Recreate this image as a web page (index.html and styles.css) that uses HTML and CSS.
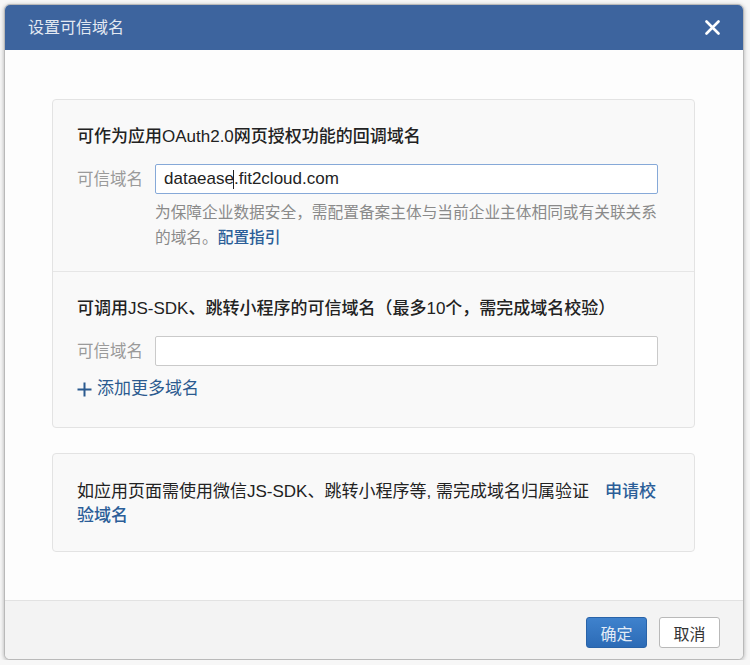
FILE: index.html
```html
<!DOCTYPE html>
<html lang="zh-CN">
<head>
<meta charset="utf-8">
<title>设置可信域名</title>
<link rel="stylesheet" href="styles.css">
</head>
<body>
<div class="dialog">
  <div class="dialog-header">
    <span class="dialog-title">设置可信域名</span>
    <span class="dialog-close" aria-label="关闭">
      <svg width="15" height="15" viewBox="0 0 15 15"><path d="M1.5 1.5 L13.5 13.5 M13.5 1.5 L1.5 13.5" stroke="#fff" stroke-width="2.6" stroke-linecap="round" fill="none"/></svg>
    </span>
  </div>
  <div class="dialog-body">
    <div class="card">
      <div class="section section-first">
        <div class="section-title">可作为应用OAuth2.0网页授权功能的回调域名</div>
        <div class="field-row">
          <span class="field-label">可信域名</span>
          <div class="field-input focused"><span>dataease</span><span class="caret"></span><span>.fit2cloud.com</span></div>
        </div>
        <div class="field-help"><span class="help-line">为保障企业数据安全，需配置备案主体与当前企业主体相同或有关联关系</span><span class="help-line">的域名。<a class="link">配置指引</a></span></div>
      </div>
      <div class="section section-second">
        <div class="section-title">可调用JS-SDK、跳转小程序的可信域名（最多10个，需完成域名校验）</div>
        <div class="field-row">
          <span class="field-label">可信域名</span>
          <div class="field-input"></div>
        </div>
        <a class="add-more">
          <svg width="15" height="15" viewBox="0 0 15 15"><path d="M7.5 0.5 V14.5 M0.5 7.5 H14.5" stroke="#2b5a8f" stroke-width="2" fill="none"/></svg>
          <span>添加更多域名</span>
        </a>
      </div>
    </div>
    <div class="card card-note">
      <p class="note"><span class="note-line">如应用页面需使用微信JS-SDK、跳转小程序等, 需完成域名归属验证<a class="link note-link">申请校</a></span><span class="note-line"><a class="link">验域名</a></span></p>
    </div>
  </div>
  <div class="dialog-footer">
    <button class="btn btn-primary">确定</button>
    <button class="btn btn-default">取消</button>
  </div>
</div>
</body>
</html>
```

FILE: styles.css
```css
* {
  box-sizing: border-box;
}

html, body {
  margin: 0;
  padding: 0;
  background: #f7f7f7;
}

body {
  font-family: "Liberation Sans", "Noto Sans CJK SC", sans-serif;
  color: #222;
  padding: 4px 0 0 4px;
}

.dialog {
  width: 740px;
  height: 656px;
  display: flex;
  flex-direction: column;
  border: 1px solid #b9b9b9;
  border-radius: 6px;
  overflow: hidden;
  background: #fdfdfd;
  box-shadow: 0 1px 4px rgba(0, 0, 0, 0.3);
}

.dialog-header {
  height: 45px;
  flex: none;
  background: #3d649e;
  display: flex;
  align-items: center;
  justify-content: space-between;
  padding: 0 23px 0 23px;
}

.dialog-title {
  color: #e3e9f2;
  font-size: 16px;
  line-height: 20px;
}

.dialog-close {
  display: flex;
  width: 15px;
  height: 15px;
}

.dialog-body {
  flex: 1;
  padding: 49px 48px 0 47px;
  display: flex;
  flex-direction: column;
  gap: 25px;
}

.card {
  background: #f9f9f9;
  border: 1px solid #e3e3e3;
  border-radius: 4px;
}

.section {
  padding: 0 24px;
}

.section-first {
  padding-top: 25px;
  padding-bottom: 21px;
  border-bottom: 1px solid #e6e6e6;
}

.section-second {
  padding-top: 25px;
  padding-bottom: 26px;
}

.section-title {
  font-size: 17px;
  line-height: 24px;
  font-weight: 500;
  color: #222;
}

.field-row {
  display: flex;
  align-items: center;
  gap: 10px;
  margin-top: 15px;
}

.field-label {
  width: 68px;
  flex: none;
  font-size: 16.5px;
  color: #9a9a9a;
  line-height: 24px;
}

.field-input {
  width: 503px;
  height: 30px;
  background: #fff;
  border: 1px solid #cacaca;
  border-radius: 2px;
  padding: 0 8px;
  display: flex;
  align-items: center;
  font-size: 17px;
  color: #222;
}

.field-input.focused {
  border-color: #86a9d8;
}

.caret {
  display: inline-block;
  width: 1px;
  height: 19px;
  background: #222;
  margin: 0 0 0 -1px;
}

.field-help {
  margin: 6px 0 0 78px;
  width: 515px;
  font-size: 15.7px;
  line-height: 25px;
  color: #8a8a8a;
  display: flex;
  flex-direction: column;
}

.help-line {
  display: block;
  white-space: nowrap;
}

.link {
  color: #2b5e98;
  font-weight: 500;
  cursor: pointer;
}

.add-more {
  display: flex;
  align-items: center;
  gap: 5px;
  margin-top: 11px;
  color: #2b5a8f;
  font-size: 17px;
  line-height: 24px;
}

.card-note {
  padding: 26px 24px 23px 24px;
}

.note {
  margin: 0;
  font-size: 17px;
  line-height: 24px;
  color: #222;
  display: flex;
  flex-direction: column;
}

.note-line {
  display: block;
  white-space: nowrap;
}

.note-link {
  margin-left: 16px;
}

.dialog-footer {
  height: 59px;
  flex: none;
  background: #f3f3f3;
  border-top: 1px solid #e2e2e2;
  display: flex;
  justify-content: flex-end;
  align-items: flex-start;
  gap: 12px;
  padding: 16px 23px 0 0;
}

.btn {
  width: 61px;
  height: 31px;
  border-radius: 3px;
  font-family: "Liberation Sans", "Noto Sans CJK SC", sans-serif;
  font-size: 16px;
  padding: 0;
  cursor: pointer;
}

.btn-primary {
  background: linear-gradient(#3f82cd, #2c6bb6);
  border: 1px solid #2963a8;
  color: #e2ebf6;
}

.btn-default {
  background: #fff;
  border: 1px solid #b9b9b9;
  color: #333;
}
```
